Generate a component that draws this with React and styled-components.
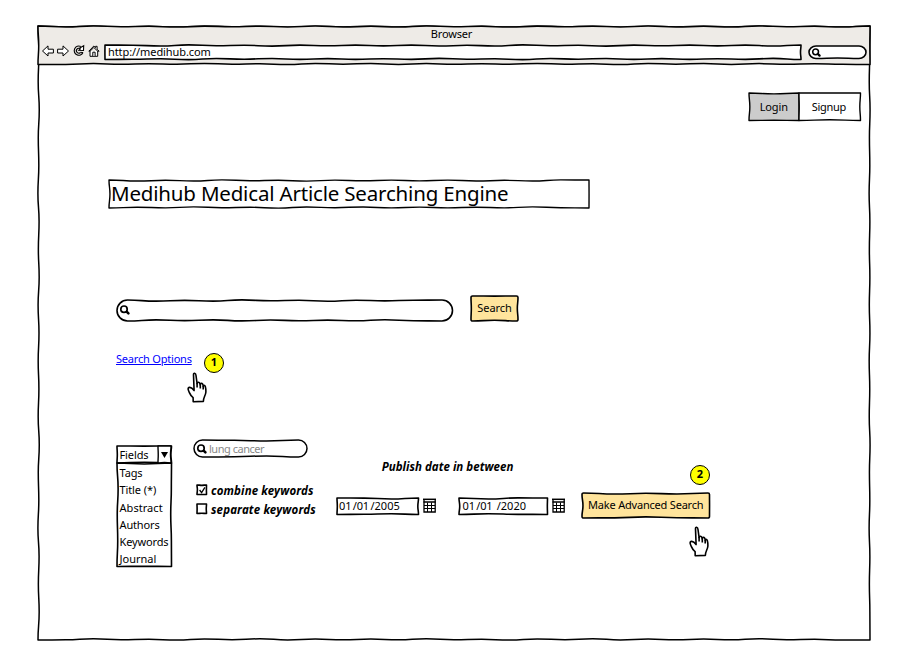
import React from 'react';
import styled, { createGlobalStyle } from 'styled-components';

const GlobalStyle = createGlobalStyle`
  body {
    margin: 0;
    background: #fff;
    color: #000;
    font-family: "Noto Sans", "Open Sans", sans-serif;
    font-size: 11px;
    line-height: 17px;
  }
  * { box-sizing: border-box; }
`;

/* ---------- hand-drawn outlines ---------- */

const OutlineSvg = styled.svg`
  position: absolute;
  left: 0;
  top: 0;
  z-index: -1;
  overflow: visible;
  pointer-events: none;
`;

const OFFSETS = [0.2, 1.1, 0.1, 1.3, 0.4, 1.2, -0.1, 0.9, 0.3, 1.4, 0.2, 1];

function wavyEdge(x0, y0, x1, y1, seed, amp) {
  const length = Math.abs(x1 - x0) + Math.abs(y1 - y0);
  const steps = Math.max(2, Math.round(length / 28));
  const horizontal = y0 === y1;
  const at = (i) => {
    const t = i / steps;
    const off = i === 0 || i === steps ? 0 : OFFSETS[(i + seed) % OFFSETS.length] * amp;
    return [
      x0 + (x1 - x0) * t + (horizontal ? 0 : off),
      y0 + (y1 - y0) * t + (horizontal ? off : 0),
    ];
  };
  let d = '';
  for (let i = 0; i < steps; i += 1) {
    const [ax, ay] = at(i);
    const [bx, by] = at(i + 1);
    const mx = (ax + bx) / 2;
    const my = (ay + by) / 2;
    d += horizontal
      ? `C${mx} ${ay} ${mx} ${by} ${bx} ${by}`
      : `C${ax} ${my} ${bx} ${my} ${bx} ${by}`;
  }
  return d;
}

function Outline({ w, h, fill = '#fff', r = 0, seed = 0, amp = 1, stroke = 1.6 }) {
  const ry = Math.min(r, h / 2);
  const corner = (x, y) => (r ? `A${r} ${ry} 0 0 1 ${x} ${y}` : '');
  const hasSides = ry < h / 2;
  const d =
    `M${r} 0` +
    wavyEdge(r, 0, w - r, 0, seed, amp) +
    corner(w, ry) +
    (hasSides ? wavyEdge(w, ry, w, h - ry, seed + 3, -amp * 0.7) : '') +
    corner(w - r, h) +
    wavyEdge(w - r, h, r, h, seed + 5, -amp) +
    corner(0, h - ry) +
    (hasSides ? wavyEdge(0, h - ry, 0, ry, seed + 2, amp) : '') +
    corner(r, 0) +
    'Z';
  return (
    <OutlineSvg width={w} height={h}>
      <path d={d} fill={fill} stroke="#000" strokeWidth={stroke} strokeLinejoin="round" />
    </OutlineSvg>
  );
}

/* ---------- shared parts ---------- */

const Sketched = styled.div`
  position: relative;
  isolation: isolate;
  flex: none;
  display: flex;
  align-items: center;
  white-space: pre;
  width: ${(p) => p.$w}px;
  height: ${(p) => p.$h}px;
`;

const Label = styled.span`
  letter-spacing: ${(p) => p.$spacing || 0}px;
  white-space: pre;
`;

const IconSvg = styled.svg`
  display: block;
  flex: none;
  overflow: visible;
`;

/* ---------- icons ---------- */

const ArrowIcon = ({ right }) => (
  <IconSvg width="12" height="12" viewBox="0 0 12 12">
    <path
      d={right ? 'M.6 4.2H6V.9L11.5 6 6 11V8H.6Z' : 'M11.4 4.2H6V.9L.5 6 6 11V8h5.4Z'}
      fill="#fff"
      stroke="#000"
      strokeLinejoin="round"
    />
  </IconSvg>
);

const ReloadIcon = () => (
  <IconSvg width="12" height="12" viewBox="0 0 12 12" fill="none" stroke="#000">
    <path d="M7.8 1.5A4.6 4.6 0 1 0 10 7.6" strokeWidth="1.1" />
    <path d="M7 3.7A2.4 2.4 0 1 0 7.6 7.3" strokeWidth="1.1" />
    <path d="M10 7.6 7.6 7.3" />
    <path d="m10.7.8-.2 4.7-4.6-.2 1.5-1.4-.6-1Z" fill="#fff" strokeWidth="1.1" />
  </IconSvg>
);

const HomeIcon = () => (
  <IconSvg width="12" height="12" viewBox="0 0 12 12" fill="#fff" stroke="#000" strokeLinejoin="round">
    <path d="M2 6v5.3h7.7V6" />
    <path d="M.8 6.2 5.8 1l1.8 1.7V1.3h1.5v2.9l2 2H9.8L5.8 2.5 2 6.2Z" />
    <path d="M4.8 11V7.2h2.3V11" />
  </IconSvg>
);

const SearchIcon = ({ size = 10 }) => (
  <IconSvg width={size} height={size} viewBox="0 0 10 10" fill="none" stroke="#000" strokeLinecap="round">
    <circle cx="4" cy="4.2" r="3.2" strokeWidth="1.7" />
    <path d="m6.9 6.9 1.5 1.5" strokeWidth="2.6" />
  </IconSvg>
);

const CalendarIcon = () => (
  <IconSvg width="13" height="15" viewBox="0 0 13 15" fill="none" stroke="#000">
    <path d="M1 1.8V14h11.2V1.8" fill="#fff" strokeWidth="1.3" />
    <path d="M0 1.3h13" strokeWidth="1.5" />
    <path d="M.5 4h12.2" strokeWidth="1.5" />
    <path d="M4.5 4.5V14M8.5 4.5V14M1 7.5h11M1 10.5h11" />
  </IconSvg>
);

const CheckIcon = () => (
  <IconSvg width="11" height="11" viewBox="0 0 11 11" fill="none" stroke="#000">
    <path d="m2.6 5 2 2.6 3.3-5.2" strokeWidth="1.3" />
  </IconSvg>
);

const HandIcon = () => (
  <IconSvg width="21" height="31" viewBox="0 0 21 31">
    <path
      d="M6.2 29.8 16.4 29.4c-.4-3.6 2.2-5.5 2.5-9.4.1-2.2-.1-4-.6-5.6-.5-1.5-2-1.3-2.1-.2-.1-1.9-.9-3-2-2.8-.9.1-1.1.6-1 1.6-.3-1.9-1.1-2.9-2.2-2.7-.7.1-1 .5-.9 1.3L9 3.5C8.8.7 6.4.5 6.5 2.9L7.1 18.6c-1-1.5-2.7-3.4-4.6-3.2-1.8.2-1.6 2-.8 3.6 1.3 2.8 1.3 4.2 4.4 6.6Z"
      fill="#fff"
      stroke="#000"
      strokeWidth="1.6"
      strokeLinejoin="round"
    />
    <path d="M10.1 11v4.6M13.3 12.6v4M16.2 14v3.5" fill="none" stroke="#000" strokeWidth="1.6" />
  </IconSvg>
);

/* ---------- browser frame ---------- */

const Page = styled.main`
  height: 661px;
  padding: 26px 0 0 38px;
`;

const Window = styled(Sketched)`
  flex-direction: column;
  align-items: stretch;
`;

const Chrome = styled(Sketched)`
  flex-direction: column;
  align-items: stretch;
`;

const WindowTitle = styled.div`
  height: 17px;
  padding-right: 5px;
  text-align: center;
  line-height: 15px;
`;

const Toolbar = styled.div`
  display: flex;
  align-items: center;
  height: 16px;
  padding-left: 4px;
  margin-top: 1px;
`;

const NavIcons = styled.div`
  display: flex;
  gap: 3.4px;
  width: 63px;
  margin-top: -2px;
`;

const AddressBar = styled(Sketched)`
  padding: 0 0 1px 3px;
`;

const Pill = styled(Sketched)`
  gap: ${(p) => p.$gap || 3}px;
  padding-left: ${(p) => p.$inset || 3}px;
  margin: ${(p) => p.$top || 0}px 0 0 ${(p) => p.$left || 0}px;
  color: #888;
`;

/* ---------- page content ---------- */

const Content = styled.section`
  display: flex;
  flex-direction: column;
  align-items: flex-start;
`;

const AuthTabs = styled(Sketched)`
  margin: 28.5px 0 0 711px;
`;

const AuthTab = styled(Sketched)`
  justify-content: center;
  padding: 0 ${(p) => p.$shift || 0}px 1.5px 0;
`;

const Heading = styled(Sketched).attrs({ as: 'h1' })`
  margin: 59.5px 0 0 71px;
  padding: 0 0 2px 2px;
  font-size: 20.5px;
  font-weight: 400;
  line-height: 28px;
`;

const SearchRow = styled.div`
  display: flex;
  align-items: center;
  gap: 19px;
  height: 25px;
  margin: 88px 0 0 78.5px;
`;

const Button = styled(Sketched).attrs({ as: 'button' })`
  justify-content: center;
  padding: 0 0 2px;
  border: 0;
  background: none;
  color: inherit;
  font: inherit;
`;

const LinkRow = styled.div`
  display: flex;
  align-items: flex-start;
  gap: 12px;
  margin: 30px 0 0 78px;
  height: 22px;
`;

const Link = styled.a`
  width: 76px;
  margin-top: -1px;
  color: #00f;
  letter-spacing: -0.2px;
  line-height: 17px;
  white-space: pre;
  text-decoration: underline;
`;

const Badge = styled.span`
  display: flex;
  align-items: center;
  justify-content: center;
  width: 20px;
  height: 20px;
  margin-top: ${(p) => p.$top || 0}px;
  padding-bottom: 1px;
  border: 1.6px solid #000;
  border-radius: 50%;
  background: #ff0;
  font-weight: 700;
  line-height: 16px;
`;

const Pointer = styled.div`
  margin: ${(p) => p.$margin};
`;

const AdvancedSearch = styled.div`
  display: flex;
  align-items: flex-start;
  margin: 43px 0 0 78.5px;
`;

const FieldSelect = styled.div`
  width: 54.5px;
`;

const SelectHead = styled(Sketched)`
  padding-left: 3px;
`;

const SelectArrow = styled(Sketched)`
  justify-content: center;
  margin-left: auto;
`;

const OptionList = styled(Sketched)`
  flex-direction: column;
  align-items: flex-start;
  padding: 1px 0 0 3px;
`;

const Option = styled(Label)`
  flex: none;
  height: 17.25px;
  line-height: 17px;
`;

const Keywords = styled.div`
  width: 126px;
  margin: -6px 0 0 23px;
`;

const CheckRow = styled.label`
  display: flex;
  align-items: center;
  gap: 4.5px;
  height: 19px;
  margin: ${(p) => p.$top || 0}px 0 0 2.5px;
  font-size: 11.5px;
  font-style: italic;
  font-weight: 700;
`;

const DateRange = styled.div`
  width: 245px;
  margin-left: 17px;
`;

const DateTitle = styled.div`
  margin: 11.5px 0 0 44.7px;
  height: 17px;
  font-size: 11.5px;
  font-style: italic;
  font-weight: 700;
  letter-spacing: 0.03px;
  white-space: pre;
`;

const DateFields = styled.div`
  display: flex;
  align-items: center;
  margin-top: 23px;
`;

const DateInput = styled(Sketched)`
  gap: ${(p) => p.$gap || 0}px;
  padding-left: ${(p) => p.$inset}px;
  margin-right: 4.5px;
`;

const DateGap = styled.div`
  width: 22.5px;
`;

const Submit = styled.div`
  margin-top: 18.5px;
`;

const FIELDS = [
  ['Tags', -0.1],
  ['Title (*)', -0.1],
  ['Abstract', 0.05],
  ['Authors', -0.15],
  ['Keywords', -0.15],
  ['Journal', 0],
];

export default function App() {
  return (
    <Page>
      <GlobalStyle />
      <Window $w={832} $h={614}>
        <Outline w={832} h={614} amp={0.9} stroke={1.5} />
        <Chrome $w={832} $h={38.5}>
          <Outline w={832} h={38.5} fill="#eeebe7" seed={4} amp={0.8} stroke={1.5} />
          <WindowTitle><Label $spacing={-0.15}>Browser</Label></WindowTitle>
          <Toolbar>
            <NavIcons>
              <ArrowIcon />
              <ArrowIcon right />
              <ReloadIcon />
              <HomeIcon />
            </NavIcons>
            <AddressBar $w={696} $h={14.5}>
              <Outline w={696} h={14.5} seed={3} amp={0.8} />
              <Label $spacing={-0.08}>http://medihub.com</Label>
            </AddressBar>
            <Pill $w={57} $h={12} $left={7.5}>
              <Outline w={57} h={12.5} r={7} seed={1} amp={0.6} />
              <SearchIcon size={9} />
            </Pill>
          </Toolbar>
        </Chrome>

        <Content>
          <AuthTabs $w={112} $h={27.5}>
            <AuthTab $w={50} $h={27.5} $shift={0.5}>
              <Outline w={50} h={27.5} fill="#ccc" seed={2} amp={0.7} stroke={1.4} />
              <Label $spacing={-0.15}>Login</Label>
            </AuthTab>
            <AuthTab $w={61.5} $h={27.5} $shift={2}>
              <Outline w={61.5} h={27.5} seed={5} amp={0.7} stroke={1.4} />
              <Label $spacing={-0.3}>Signup</Label>
            </AuthTab>
          </AuthTabs>

          <Heading $w={480} $h={28}>
            <Outline w={480} h={28} amp={0.8} stroke={1.4} seed={2} />
            <Label $spacing={-0.18}>Medihub Medical Article Searching Engine</Label>
          </Heading>

          <SearchRow>
            <Pill $w={335.5} $h={21} $inset={3.5} $top={3}>
              <Outline w={335.5} h={21} r={10.5} seed={2} amp={0.9} />
              <SearchIcon />
            </Pill>
            <Button $w={47} $h={25}>
              <Outline w={47} h={25} r={1.5} fill="#ffe49c" seed={1} amp={0.8} />
              <Label $spacing={-0.05}>Search</Label>
            </Button>
          </SearchRow>

          <LinkRow>
            <Link>Search Options</Link>
            <Badge $top={1.5}>1</Badge>
          </LinkRow>
          <Pointer $margin="-1px 0 0 149px"><HandIcon /></Pointer>

          <AdvancedSearch>
            <FieldSelect>
              <SelectHead $w={54.5} $h={17}>
                <Outline w={54.5} h={17} seed={1} amp={0.8} />
                <Label $spacing={-0.1}>Fields</Label>
                <SelectArrow $w={13} $h={17}>
                  <Outline w={13} h={17} seed={1} amp={0.6} stroke={1.4} />
                  <IconSvg width="7" height="6"><path d="M0 0h7L3.5 6Z" /></IconSvg>
                </SelectArrow>
              </SelectHead>
              <OptionList $w={54.5} $h={103.5}>
                <Outline w={54.5} h={103.5} seed={4} amp={0.8} />
                {FIELDS.map(([name, spacing]) => (
                  <Option key={name} $spacing={spacing}>{name}</Option>
                ))}
              </OptionList>
            </FieldSelect>

            <Keywords>
              <Pill $w={113} $h={17} $gap={2}>
                <Outline w={113} h={17} r={8.5} seed={3} amp={0.8} stroke={1.5} />
                <SearchIcon />
                <Label $spacing={-0.48}>lung cancer</Label>
              </Pill>
              <CheckRow $top={23.5}>
                <Sketched $w={10} $h={10}>
                  <Outline w={9.5} h={9.5} amp={0.3} />
                  <CheckIcon />
                </Sketched>
                <Label $spacing={0.13}>combine keywords</Label>
              </CheckRow>
              <CheckRow>
                <Sketched $w={10} $h={10}>
                  <Outline w={9.5} h={9.5} amp={0.3} seed={1} />
                </Sketched>
                <Label $spacing={0.15}>separate keywords</Label>
              </CheckRow>
            </Keywords>

            <DateRange>
              <DateTitle>Publish date in between</DateTitle>
              <DateFields>
                <DateInput $w={81.5} $h={16.5} $inset={2} $gap={1.3}>
                  <Outline w={81.5} h={16.5} seed={1} amp={0.8} />
                  <Label $spacing={-0.1}>01</Label>
                  <Label $spacing={-0.1}>/01</Label>
                  <Label $spacing={0.05}>/2005</Label>
                </DateInput>
                <CalendarIcon />
                <DateGap />
                <DateInput $w={88.5} $h={16.5} $inset={4} $gap={1.3}>
                  <Outline w={88.5} h={16.5} seed={4} amp={0.8} />
                  <Label $spacing={-0.1}>01</Label>
                  <Label $spacing={-0.1}>{'/01 '}</Label>
                  <Label $spacing={0.05}>/2020</Label>
                </DateInput>
                <CalendarIcon />
              </DateFields>
            </DateRange>

            <Submit>
              <Pointer $margin="0 0 8px 108px"><Badge>2</Badge></Pointer>
              <Button $w={127.5} $h={25}>
                <Outline w={127.5} h={25} r={1.5} fill="#ffe49c" seed={2} amp={0.8} />
                <Label $spacing={-0.2}>Make Advanced Search</Label>
              </Button>
              <Pointer $margin="8px 0 0 107px"><HandIcon /></Pointer>
            </Submit>
          </AdvancedSearch>
        </Content>
      </Window>
    </Page>
  );
}
